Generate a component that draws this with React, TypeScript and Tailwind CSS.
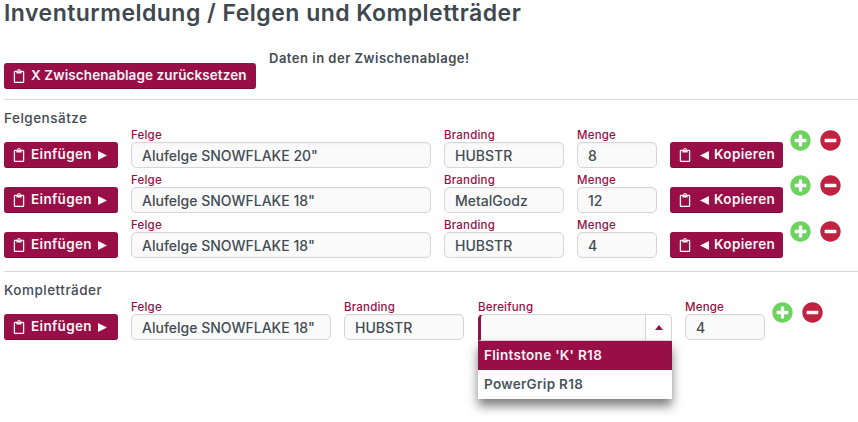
import React from 'react';
import { FaRegClipboard, FaPlusCircle, FaMinusCircle } from 'react-icons/fa';

const font = "font-['Inter','Liberation_Sans',sans-serif]";

const ActionButton = ({ className, children }: { className: string; children: React.ReactNode }) => (
  <button className={`flex h-[26px] shrink-0 items-center rounded-[3px] border-b border-[#7c0b39] bg-[#970f46] pt-[1px] pl-[8px] text-[13.5px] leading-none font-semibold whitespace-nowrap text-[#fbf4f7] ${className}`}>
    <FaRegClipboard className="mr-[5px] text-[14px]" />
    {children}
  </button>
);

const Paste = () => (
  <ActionButton className="w-[114px] tracking-[0.35px]">
    Einfügen
    <svg className="ml-[6px]" width="9" height="9" viewBox="0 0 9 9">
      <path d="M0 0L9 4.5L0 9Z" fill="#fbf4f7" />
    </svg>
  </ActionButton>
);

const Copy = () => (
  <ActionButton className="w-[113px] tracking-[0.35px]">
    <svg className="mr-[5px] ml-[3px]" width="9" height="9" viewBox="0 0 9 9">
      <path d="M9 0L0 4.5L9 9Z" fill="#fbf4f7" />
    </svg>
    Kopieren
  </ActionButton>
);

const Label = ({ children }: { children: string }) => (
  <span className="block h-[14px] text-[11.5px] leading-[14px] font-medium tracking-[0.2px] text-[#970f46]">{children}</span>
);

const Field = ({ label, value, width }: { label: string; value: string; width: string }) => (
  <label className={`block shrink-0 ${width}`}>
    <Label>{label}</Label>
    <input
      readOnly
      value={value}
      className="block h-[26px] w-full rounded-[5px] border border-[#d6d6d6] bg-[#fafafa] pl-[10px] text-[14px] font-medium text-[#434c55] shadow-[inset_0_1px_2px_rgba(0,0,0,0.04)] outline-none"
    />
  </label>
);

const RowIcons = ({ offset }: { offset: string }) => (
  <div className={`-ml-[6px] flex shrink-0 gap-[9px] self-start ${offset}`}>
    <FaPlusCircle className="text-[21px] text-[#6dd35f]" />
    <FaMinusCircle className="text-[21px] text-[#c1223f]" />
  </div>
);

const rims = [
  { rim: 'Alufelge SNOWFLAKE 20"', brand: 'HUBSTR', qty: '8', offset: 'mt-[7px]' },
  { rim: 'Alufelge SNOWFLAKE 18"', brand: 'MetalGodz', qty: '12', offset: 'mt-[7px]' },
  { rim: 'Alufelge SNOWFLAKE 18"', brand: 'HUBSTR', qty: '4', offset: 'mt-[8px]' },
];

export default function App() {
  return (
    <div className={`h-[422px] w-[858px] overflow-hidden bg-white pl-[4px] text-[#434c55] ${font}`}>
      <h1 className="h-[36px] text-[23px] leading-[26px] font-semibold tracking-[0.48px] text-[#40484f]">
        Inventurmeldung / Felgen und Kompletträder
      </h1>

      <div className="flex h-[63px] items-start">
        <ActionButton className="mt-[27px] w-[252px] tracking-[0.1px]">X Zwischenablage zurücksetzen</ActionButton>
        <p className="mt-[13px] ml-[13px] text-[13px] leading-[18px] font-semibold tracking-[0.5px]">Daten in der Zwischenablage!</p>
      </div>

      <hr className="border-t border-[#d8d8d8]" />

      <h2 className="mt-[9px] h-[14px] text-[13.5px] leading-[18px] font-medium tracking-[0.5px]">Felgensätze</h2>

      {rims.map((row, i) => (
        <div key={i} className="flex h-[45px] items-end gap-[13px]">
          <Paste />
          <Field label="Felge" value={row.rim} width="w-[300px]" />
          <Field label="Branding" value={row.brand} width="w-[120px]" />
          <Field label="Menge" value={row.qty} width="w-[80px]" />
          <Copy />
          <RowIcons offset={row.offset} />
        </div>
      ))}

      <hr className="mt-[13px] border-t border-[#d8d8d8]" />

      <h2 className="mt-[9px] h-[14px] text-[13.5px] leading-[18px] font-medium tracking-[0.5px]">Kompletträder</h2>

      <div className="flex h-[45px] items-end gap-[13px]">
        <Paste />
        <Field label="Felge" value={'Alufelge SNOWFLAKE 18"'} width="w-[200px]" />
        <Field label="Branding" value="HUBSTR" width="w-[120px]" />

        <div className="relative ml-px -mb-px w-[194px] shrink-0">
          <Label>Bereifung</Label>
          <div className="flex h-[27px] rounded-t-[5px] border border-[#d6d6d6] border-l-[3px] border-l-[#970f46] bg-[#fafafa]">
            <div className="flex-1" />
            <div className="flex w-[26px] items-center justify-center rounded-tr-[5px] border-l border-[#d6d6d6] bg-white">
              <svg width="8" height="5" viewBox="0 0 8 5">
                <path d="M4 0L8 5H0Z" fill="#970f46" />
              </svg>
            </div>
          </div>
          <ul className="absolute top-[41px] left-0 w-full bg-white text-[13.5px] font-semibold tracking-[0.3px] shadow-[0_7px_10px_rgba(0,0,0,0.5)]">
            <li className="flex h-[29px] items-center bg-[#970f46] pl-[6px] text-[#fbf4f7]">Flintstone 'K' R18</li>
            <li className="flex h-[29px] items-center pl-[6px] text-[#4b545c]">PowerGrip R18</li>
          </ul>
        </div>

        <Field label="Menge" value="4" width="w-[80px]" />
        <RowIcons offset="mt-[7px]" />
      </div>
    </div>
  );
}
